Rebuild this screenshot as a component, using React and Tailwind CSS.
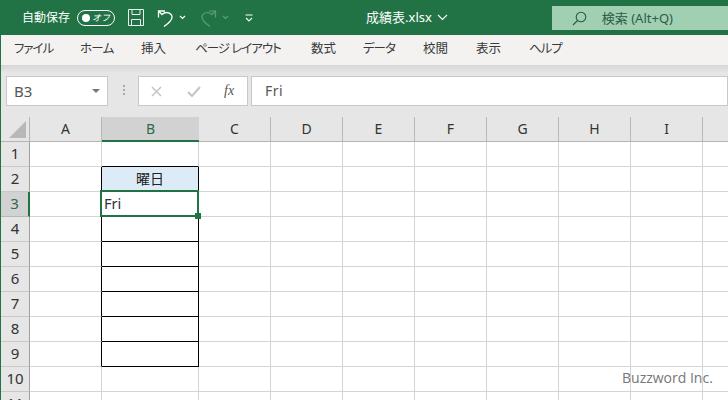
const jp = { fontFamily: '"Noto Sans","Noto Sans CJK JP",sans-serif' };
const colWidths = [72, 97, 72, 72, 72, 72, 72, 72, 72, 72];
const colNames = ["A", "B", "C", "D", "E", "F", "G", "H", "I", ""];
const tabs = [
  ["ファイル", "w-[66px] tracking-[-1px]"],
  ["ホーム", "w-[61px] tracking-[-0.7px]"],
  ["挿入", "w-[54px]"],
  ["ページ レイアウト", "w-[116px] tracking-[-1px]"],
  ["数式", "w-[52px]"],
  ["データ", "w-[60px] tracking-[-1px]"],
  ["校閲", "w-[53px]"],
  ["表示", "w-[53px]"],
  ["ヘルプ", "w-[50px] tracking-[-1px]"],
];
const rows = [1, 2, 3, 4, 5, 6, 7, 8, 9, 10, 11];

function Cell({ row, col }) {
  const boxed = col === 1 && row >= 2 && row <= 9;
  const leftOfBox = col === 0 && row >= 2 && row <= 9;
  const aboveBox = col === 1 && row === 1;
  const right = boxed || leftOfBox ? "border-r-black" : "border-r-[#d4d4d4]";
  const bottom = boxed || aboveBox ? "border-b-black" : "border-b-[#d4d4d4]";
  const bg = col === 1 && row === 2 ? "bg-[#ddebf7]" : "bg-white";
  const active = col === 1 && row === 3 ? "z-10" : "";
  return (
    <div
      className={`relative h-full shrink-0 border-r border-b ${right} ${bottom} ${bg} ${active}`}
      style={{ width: colWidths[col] }}
    >
      {col === 1 && row === 2 && (
        <div className="flex h-full items-center justify-center pb-[1px] text-[14px] leading-none text-[#222]" style={jp}>曜日</div>
      )}
      {col === 1 && row === 3 && (
        <>
          <div className="absolute left-[-2px] top-[-2px] h-[27px] w-[99px] border-2 border-[#217346]" />
          <div className="absolute left-[2px] top-[1px] text-[14.5px] leading-5 text-[#333]" style={jp}>Fri</div>
          <div className="absolute right-[-3px] bottom-[-3px] h-[6px] w-[6px] bg-[#217346]" />
        </>
      )}
    </div>
  );
}

export default function App() {
  return (
    <div className="relative flex h-[400px] w-[728px] flex-col overflow-hidden bg-white" style={jp}>
      {/* Title bar */}
      <div className="flex h-[35px] shrink-0 items-center bg-[#217346] text-white">
        <span className="ml-[22px] text-[12px] leading-none">自動保存</span>
        <div className="ml-[7px] flex h-[16px] w-[38px] items-center justify-between rounded-full border border-white pl-[4px] pr-[4px]">
          <span className="h-[8px] w-[8px] rounded-full bg-white" />
          <span className="text-[9px] italic leading-none">オフ</span>
        </div>
        <svg className="ml-[13px]" width="16" height="17" viewBox="0 0 16 17" fill="none" stroke="#e8f1ec" strokeWidth="1">
          <path d="M.5.5h15v16H.5zM4 .5v5h8v-5M3.500 16.500v-6h9v6" />
        </svg>
        <svg className="ml-[13px]" width="17" height="18" viewBox="0 0 17 18" fill="none" stroke="#fff" strokeWidth="1.300">
          <path d="M1.500 8.500V2H8M2 2.500 5 5.500C7.500 3 12 2.500 14.500 6c2 3.500-2.500 8-7.500 11.500" />
        </svg>
        <svg className="ml-[5px]" width="7" height="5" viewBox="0 0 7 5" fill="none" stroke="#fff" strokeWidth="1.200"><path d="m1 1 2.500 2.500L6 1" /></svg>
        <svg className="ml-[14px]" width="17" height="18" viewBox="0 0 17 18" fill="none" stroke="#5f9c7e" strokeWidth="1.200">
          <path d="M15.500 8.500V2H9M15 2.500 12 5.500C9.500 3 5 2.500 2.500 6c-2 3.500 2.500 8 7.500 11.500" />
        </svg>
        <svg className="ml-[5px]" width="7" height="5" viewBox="0 0 7 5" fill="none" stroke="#5f9c7e" strokeWidth="1.200"><path d="m1 1 2.500 2.500L6 1" /></svg>
        <svg className="ml-[16px]" width="8" height="8" viewBox="0 0 8 8" fill="none" stroke="#fff" strokeWidth="1.100"><path d="M.5 1h7M1 4l3 3 3-3" /></svg>
        <div className="ml-[113px] flex items-center text-[13px] leading-none">
          <span>成績表.xlsx</span>
          <svg className="ml-[5px]" width="11" height="7" viewBox="0 0 11 7" fill="none" stroke="#fff" strokeWidth="1.100"><path d="m1 1 4.500 4.500L10 1" /></svg>
        </div>
        <div className="ml-[104px] mt-[1px] flex h-[24px] flex-1 items-center bg-[#a0cfb2] text-[#2c5c46]">
          <svg className="ml-[20px]" width="15" height="15" viewBox="0 0 15 15" fill="none" stroke="#285a44" strokeWidth="1.100">
            <circle cx="9" cy="6" r="4.800" /><path d="M5.500 9.500 1 14" />
          </svg>
          <span className="ml-[15px] text-[13px] leading-none">検索 (Alt+Q)</span>
        </div>
      </div>

      {/* Ribbon tabs */}
      <div className="flex h-[30px] shrink-0 items-center border-l border-[#217346] bg-[#f3f2f1] pb-[2px] pl-[13px] text-[12.5px] leading-none text-[#3a3a3a] [font-feature-settings:'palt']">
        {tabs.map(([t, c]) => (
          <span key={t} className={`shrink-0 whitespace-nowrap ${c}`}>{t}</span>
        ))}
      </div>

      {/* Formula bar */}
      <div className="flex h-[52px] shrink-0 items-start border-l border-[#217346] bg-gradient-to-b from-[#d6d6d6] from-0% via-[#e6e6e6] via-15% to-[#e6e6e6] pt-[11px]">
        <div className="ml-[5px] flex h-[30px] w-[102px] items-center justify-between border border-[#c8c8c8] bg-white pl-[7px] pr-[7px]">
          <span className="text-[15px] leading-none text-[#555]">B3</span>
          <span className="h-0 w-0 border-x-[4px] border-t-[4px] border-x-transparent border-t-[#777]" />
        </div>
        <div className="ml-[15px] mt-[9px] flex flex-col gap-[2px]">
          <span className="h-[2px] w-[2px] bg-[#aaa]" />
          <span className="h-[2px] w-[2px] bg-[#aaa]" />
          <span className="h-[2px] w-[2px] bg-[#aaa]" />
        </div>
        <div className="ml-[13px] flex h-[30px] w-[110px] items-center border border-[#c8c8c8] bg-white">
          <svg className="ml-[12px]" width="11" height="11" viewBox="0 0 11 11" fill="none" stroke="#c4c4c4" strokeWidth="1.500"><path d="m1 1 9 9M10 1l-9 9" /></svg>
          <svg className="ml-[25px]" width="14" height="11" viewBox="0 0 14 11" fill="none" stroke="#c4c4c4" strokeWidth="2"><path d="m1 6 4 4 8-9" /></svg>
          <span className="ml-[23px] text-[14px] italic leading-none text-[#555]" style={{ fontFamily: '"Liberation Serif",serif' }}>fx</span>
        </div>
        <div className="ml-[3px] flex h-[30px] flex-1 items-center border border-[#c8c8c8] bg-white pl-[13px] text-[14px] leading-none tracking-[0.5px] text-[#555]">
          Fri
        </div>
      </div>

      {/* Column headers */}
      <div className="flex h-[25px] shrink-0 border-l border-[#217346] bg-[#e6e6e6]">
        <div className="relative h-full w-[29px] shrink-0 border-r border-b border-[#b5b5b5]">
          <span className="absolute bottom-[3px] right-[3px] h-0 w-0 border-b-[17px] border-l-[17px] border-b-[#b8b8b8] border-l-transparent" />
        </div>
        {colNames.map((n, i) => (
          <div
            key={i}
            className={
              i === 1
                ? "flex h-full shrink-0 items-center justify-center border-b-2 border-[#217346] bg-[#d2d2d2] text-[14px] leading-none text-[#2e6a4d]"
                : "flex h-full shrink-0 items-center justify-center border-r border-b border-r-[#b8b8b8] border-b-[#b5b5b5] text-[14px] leading-none text-[#333]"
            }
            style={{ width: colWidths[i] }}
          >
            {n}
          </div>
        ))}
      </div>

      {/* Grid rows */}
      <div className="flex flex-1 flex-col border-l border-[#217346]">
        {rows.map((r) => (
          <div key={r} className="flex h-[25px] shrink-0">
            <div
              className={
                r === 3
                  ? "flex h-full w-[29px] shrink-0 items-center justify-center border-r-2 border-b border-r-[#217346] border-b-[#b8b8b8] bg-[#d2d2d2] pb-[2px] text-[15px] leading-none text-[#2e6a4d]"
                  : "flex h-full w-[29px] shrink-0 items-center justify-center border-r border-b border-r-[#9e9e9e] border-b-[#c8c8c8] bg-[#e6e6e6] pb-[2px] text-[15px] leading-none text-[#333]"
              }
            >
              {r}
            </div>
            {colWidths.map((_, c) => (
              <Cell key={c} row={r} col={c} />
            ))}
          </div>
        ))}
      </div>

      {/* Watermark */}
      <div className="pointer-events-none absolute left-[622px] top-[368px] z-20 text-[14px] font-medium leading-5 text-[#777]" style={{ fontFamily: '"Open Sans",sans-serif' }}>
        Buzzword Inc.
      </div>
    </div>
  );
}
